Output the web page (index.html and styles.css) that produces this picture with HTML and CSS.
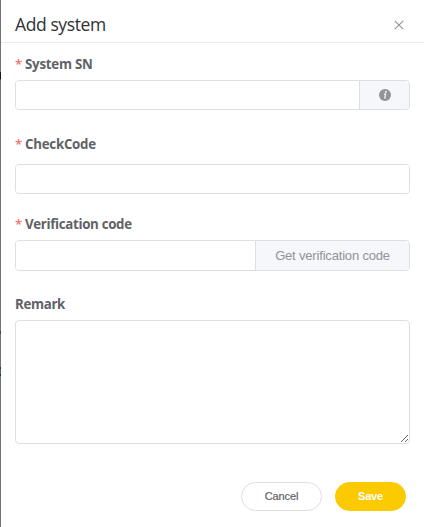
FILE: index.html
```
<!DOCTYPE html>
<html lang="en">
<head>
<meta charset="utf-8">
<title>Add system</title>
<link rel="stylesheet" href="styles.css">
</head>
<body>
<div class="drawer">
  <header class="header">
    <h1 class="title">Add system</h1>
    <svg class="close" viewBox="0 0 10 10" width="10" height="10"><path d="M.8.8 9.2 9.2M9.2.8.8 9.2"/></svg>
  </header>
  <form class="form">
    <div class="field">
      <label class="label"><span class="star">*</span><span class="short">System SN</span></label>
      <div class="group">
        <input class="input" type="text">
        <span class="append info"><svg viewBox="0 0 12 12" width="12" height="12"><circle cx="6" cy="6" r="6" fill="#909399"/><circle cx="6.8" cy="3" r="1" fill="#f5f7fa"/><path d="M5 5.2h1.6L5.8 9h1" fill="none" stroke="#f5f7fa" stroke-width="1.2"/></svg></span>
      </div>
    </div>
    <div class="field check">
      <label class="label"><span class="star">*</span><span class="short">CheckCode</span></label>
      <div class="group"><input class="input" type="text"></div>
    </div>
    <div class="field verify">
      <label class="label"><span class="star">*</span><span class="long">Verification code</span></label>
      <div class="group">
        <input class="input" type="text">
        <span class="append code">Get verification code</span>
      </div>
    </div>
    <div class="field remark">
      <label class="label"><span class="long">Remark</span></label>
      <textarea class="area"></textarea>
    </div>
  </form>
  <footer class="footer">
    <button class="btn cancel" type="button">Cancel</button>
    <button class="btn save" type="button">Save</button>
  </footer>
</div>
</body>
</html>
```
FILE: styles.css
```
* { box-sizing: border-box; }
body { margin: 0; background: #fff; font-family: "Open Sans", "Noto Sans", sans-serif; overflow: hidden; }
.drawer {
  height: 527px;
  padding-left: 1px;
  background: linear-gradient(#737373 0 72px, #10133a 72px 79px, #466274 79px 80px, #737373 80px 331px, #3c4257 331px 334px, #737373 334px 367px, #30353c 367px 369px, #416b80 369px 374px, #30353c 374px 376px, #737373 376px) left / 1px 100% no-repeat;
}
.header { height: 43px; border-bottom: 1px solid #ebebee; display: flex; align-items: center; justify-content: space-between; padding: 5px 20px 0 14px; }
.title { margin: 0; font-size: 17.5px; font-weight: 400; line-height: 24px; letter-spacing: -.4px; color: #303133; }
.close { margin-top: 2px; stroke: #909399; stroke-width: 1.1; fill: none; }
.form { padding: 9px 14px 0; }
.label { display: flex; height: 28px; line-height: 25px; font-size: 13.3px; font-weight: 700; color: #606266; white-space: nowrap; }
.short { letter-spacing: -.25px; }
.long { letter-spacing: -.33px; }
.star { width: 10px; color: #f56c6c; font-weight: 600; }
.group { display: flex; height: 30px; border: 1px solid #dcdfe6; border-radius: 4px; overflow: hidden; }
.input { flex: 1; min-width: 0; border: 0; outline: 0; padding: 0 15px; background: #fff; }
.append { flex: none; display: flex; align-items: center; justify-content: center; background: #f5f7fa; border-left: 1px solid #dcdfe6; color: #909399; }
.info { width: 50px; }
.code { width: 154px; font: 13px "Liberation Sans", sans-serif; letter-spacing: -.18px; }
.check { margin-top: 22px; }
.check .label { height: 32px; }
.verify { margin-top: 18px; }
.verify .group { height: 31px; }
.remark { margin-top: 21px; }
.area { display: block; width: 100%; height: 124px; border: 1px solid #dcdfe6; border-radius: 4px; outline: 0; resize: vertical; background: #fff; }
.footer { display: flex; justify-content: flex-end; gap: 13px; padding: 38px 18px 0 0; }
.btn { height: 29px; border-radius: 15px; border: 1px solid #dcdfe6; padding: 0 0 1px; background: #fff; color: #606266; font: 11px "Liberation Sans", sans-serif; letter-spacing: -.1px; -webkit-text-stroke: .2px currentColor; }
.cancel { width: 81px; }
.save { width: 71px; background: #fbca00; border-color: #fbca00; color: #fff; font-weight: 700; letter-spacing: -.2px; -webkit-text-stroke: 0; }
```
